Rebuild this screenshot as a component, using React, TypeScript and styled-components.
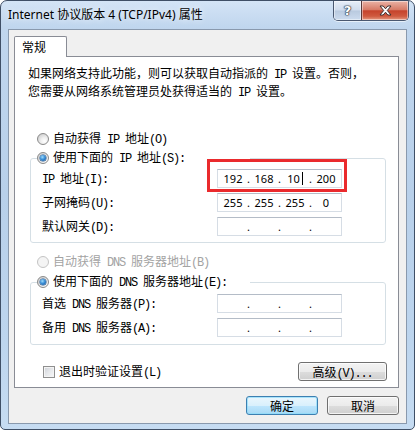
import React from 'react';
import styled, { createGlobalStyle, css } from 'styled-components';

const GlobalStyle = createGlobalStyle`
  html, body {
    margin: 0;
    padding: 0;
    background: #ffffff;
  }
  body {
    width: 415px;
    height: 430px;
    overflow: hidden;
    font-family: "Noto Sans CJK SC", sans-serif;
  }
  * {
    box-sizing: border-box;
  }
`;

const Window = styled.div`
  width: 415px;
  height: 430px;
  border: 1px solid #3f4f66;
  border-radius: 7px 7px 5px 5px;
  background: linear-gradient(180deg, #d4e4f6 0px, #c0d6ee 26px, #b8d0ea 45%, #bdd5ee 80%, #c6dcf2 100%);
  display: flex;
  flex-direction: column;
  overflow: hidden;
`;

const TitleBar = styled.div`
  height: 28px;
  flex-shrink: 0;
  display: flex;
  align-items: flex-start;
  padding: 0 5px 0 7px;
`;

const Title = styled.div`
  flex: 1;
  padding-top: 6px;
  font: 12px/16px "Noto Sans", "Noto Sans CJK SC", sans-serif;
  color: #000;
  text-shadow: 0 0 6px rgba(255, 255, 255, 0.95);
`;

const CaptionGroup = styled.div`
  display: flex;
  height: 20px;
  border: 1px solid #4a5870;
  border-top: none;
  border-radius: 0 0 5px 5px;
  overflow: hidden;
  box-shadow: 0 1px 0 rgba(255, 255, 255, 0.6);
`;

const CaptionButton = styled.div<{ $close?: boolean }>`
  width: ${(p) => (p.$close ? 47 : 27)}px;
  display: flex;
  align-items: center;
  justify-content: center;
  box-shadow: inset 0 0 0 1px rgba(255, 255, 255, 0.45);
  background: linear-gradient(180deg, #e6eef8 0%, #d0dced 48%, #b9cadf 52%, #ccdbee 100%);
  font: bold 13px/1 "DejaVu Sans", sans-serif;
  color: #fff;
  text-shadow: 0 0 1px #2e3a4a, 0 0 1px #2e3a4a, 0 0 1px #2e3a4a, 0 0 2px #2e3a4a;
  ${(p) =>
    p.$close &&
    css`
      border-left: 1px solid #5a3a3a;
      background: linear-gradient(180deg, #eab3a6 0%, #d77c68 45%, #c6432c 52%, #cf5a3f 80%, #e59a82 100%);
    `}
`;

const Client = styled.div`
  flex: 1;
  margin: 0 7px 5px;
  border: 1px solid #8999ad;
  background: #f0f0f0;
  padding: 6px 7px 8px 5px;
  display: flex;
  flex-direction: column;
`;

const TabStrip = styled.div`
  height: 20px;
  display: flex;
`;

const Tab = styled.div`
  position: relative;
  z-index: 1;
  width: 53px;
  height: 21px;
  border: 1px solid #898c95;
  border-bottom: none;
  border-radius: 2px 2px 0 0;
  background: #fff;
  padding-left: 7px;
  font: 12px/19px "Noto Sans CJK SC", sans-serif;
  color: #000;
`;

const Panel = styled.div`
  width: 385px;
  height: 332px;
  border: 1px solid #898c95;
  background: #fff;
  padding: 8px 12px 0 15px;
  display: flex;
  flex-direction: column;
  font: 12px/14px "Noto Sans CJK SC", sans-serif;
  color: #000;
`;

const Ascii = styled.span`
  font-family: "Liberation Mono", monospace;
  font-size: 12px;
  letter-spacing: -1.2px;
`;

const T: React.FC<{ s: string }> = ({ s }) => (
  <>
    {s.split(/([ -~]+)/).map((part, i) => (i % 2 ? <Ascii key={i}>{part}</Ascii> : part))}
  </>
);

const Description = styled.p`
  margin: 0 0 0 -2px;
  line-height: 15px;
  white-space: nowrap;
`;

const RadioRow = styled.label<{ $disabled?: boolean; $gap: number }>`
  display: flex;
  align-items: center;
  gap: 4px;
  height: 16px;
  margin-top: ${(p) => p.$gap}px;
  padding-left: 7px;
  color: ${(p) => (p.$disabled ? '#a3a3a3' : '#000')};
  white-space: nowrap;
`;

const Radio = styled.span<{ $checked?: boolean; $disabled?: boolean }>`
  position: relative;
  width: 12px;
  height: 12px;
  flex-shrink: 0;
  border-radius: 50%;
  border: 1px solid ${(p) => (p.$disabled ? '#c4c4c4' : '#8a8a8a')};
  background: ${(p) =>
    p.$disabled
      ? '#f4f4f4'
      : 'radial-gradient(circle at 65% 70%, #ffffff 0%, #f0f0f0 35%, #d4d4d4 75%, #c2c2c2 100%)'};

  ${(p) =>
    p.$checked &&
    css`
      &::after {
        content: '';
        position: absolute;
        left: 2px;
        top: 2px;
        width: 6px;
        height: 6px;
        border-radius: 50%;
        background: radial-gradient(circle at 40% 35%, #9fdcfb 0%, #3a8ed6 45%, #0e4c8f 100%);
        box-shadow: 0 0 0 0.5px #1c4f86;
      }
    `}
`;

const Group = styled.fieldset<{ $gap: number; $bottom: number }>`
  margin: ${(p) => p.$gap}px 0 0;
  padding: 0 0 ${(p) => p.$bottom}px 0;
  border: 1px solid #d5dfe5;
  border-radius: 3px;
  min-width: 0;
`;

const Legend = styled.legend`
  display: flex;
  align-items: center;
  gap: 4px;
  width: 213px;
  height: 16px;
  margin-left: 6px;
  padding: 0;
  white-space: nowrap;
`;

const FieldGrid = styled.div<{ $top: number }>`
  display: grid;
  grid-template-columns: 175px 125px;
  row-gap: 5px;
  align-items: center;
  margin-top: ${(p) => p.$top}px;
  padding-left: 11px;
  white-space: nowrap;
`;

const FieldCell = styled.div`
  position: relative;
  height: 19px;
`;

const IpField = styled.div`
  width: 125px;
  height: 19px;
  border: 1px solid #d6dde5;
  border-top-color: #b4bcc7;
  background: #fff;
  display: flex;
  align-items: center;
  padding: 0 3px;
  font: 11px/17px "Noto Sans", sans-serif;
  color: #000;
`;

const Octet = styled.span`
  width: 24px;
  text-align: center;
`;

const Dot = styled.span`
  width: 7px;
  text-align: center;
`;

const Caret = styled.span`
  display: inline-block;
  width: 1px;
  height: 13px;
  margin-left: 2px;
  background: #000;
  vertical-align: -2px;
`;

const Highlight = styled.div`
  position: absolute;
  left: -10px;
  top: -10px;
  right: -5px;
  bottom: -4px;
  border: 3px solid #ea2a2d;
  pointer-events: none;
`;

const BottomRow = styled.div`
  display: flex;
  align-items: center;
  justify-content: space-between;
  margin: 17px -1px 0 0;
  padding-left: 13px;
`;

const CheckLabel = styled.label`
  display: flex;
  align-items: center;
  gap: 4px;
  white-space: nowrap;
`;

const CheckBox = styled.span`
  width: 12px;
  height: 12px;
  border: 1px solid #8f8f8f;
  background: linear-gradient(135deg, #cdd1d6 0%, #e6e8eb 50%, #f8f8f8 100%);
  box-shadow: inset 0 0 0 1px #f4f4f4;
`;

const Button = styled.button<{ $w: number; $default?: boolean }>`
  width: ${(p) => p.$w}px;
  height: 19px;
  padding: 0;
  border: 1px solid #707070;
  border-radius: 3px;
  background: linear-gradient(180deg, #f3f3f3 0%, #ebebeb 50%, #dddddd 51%, #cfcfcf 100%);
  box-shadow: inset 0 0 0 1px rgba(255, 255, 255, 0.75);
  font: 12px/17px "Noto Sans CJK SC", sans-serif;
  color: #000;
  ${(p) =>
    p.$default &&
    css`
      border-color: #3c7fb1;
      background: linear-gradient(180deg, #eaf6fd 0%, #d9f0fc 50%, #bee6fd 51%, #a7d9f5 100%);
      box-shadow: inset 0 0 0 1px rgba(140, 220, 250, 0.7);
    `}
`;

const ButtonRow = styled.div`
  display: flex;
  justify-content: flex-end;
  gap: 9px;
  margin-top: 8px;
`;

const CloseGlyph = () => (
  <svg width="13" height="11" viewBox="0 0 13 11">
    <path
      d="M1 1h3.2l2.3 2.8 2.3-2.8H12L8.3 5.5 12 10H8.8L6.5 7.2 4.2 10H1l3.7-4.5z"
      fill="#fff"
      stroke="#3a3030"
      strokeWidth="1"
      strokeLinejoin="round"
    />
  </svg>
);

const IpValue: React.FC<{ parts: string[]; caretAt?: number }> = ({ parts, caretAt }) => (
  <IpField>
    {parts.map((part, i) => (
      <React.Fragment key={i}>
        {i > 0 && <Dot>.</Dot>}
        <Octet>
          {part}
          {caretAt === i && <Caret />}
        </Octet>
      </React.Fragment>
    ))}
  </IpField>
);

const empty = ['', '', '', ''];

export default function App() {
  return (
    <>
      <GlobalStyle />
      <Window>
        <TitleBar>
          <Title>Internet 协议版本 4 (TCP/IPv4) 属性</Title>
          <CaptionGroup>
            <CaptionButton>?</CaptionButton>
            <CaptionButton $close>
              <CloseGlyph />
            </CaptionButton>
          </CaptionGroup>
        </TitleBar>
        <Client>
          <TabStrip>
            <Tab>常规</Tab>
          </TabStrip>
          <Panel>
            <Description>
              <T s="如果网络支持此功能，则可以获取自动指派的 IP 设置。否则，" />
              <br />
              <T s="您需要从网络系统管理员处获得适当的 IP 设置。" />
            </Description>

            <RadioRow $gap={30}>
              <Radio />
              <span>
                <T s="自动获得 IP 地址(O)" />
              </span>
            </RadioRow>

            <Group $gap={3} $bottom={6}>
              <Legend>
                <Radio $checked />
                <span>
                  <T s="使用下面的 IP 地址(S):" />
                </span>
              </Legend>
              <FieldGrid $top={3}>
                <span>
                  <T s="IP 地址(I):" />
                </span>
                <FieldCell>
                  <IpValue parts={['192', '168', '10', '200']} caretAt={2} />
                  <Highlight />
                </FieldCell>
                <span>
                  <T s="子网掩码(U):" />
                </span>
                <IpValue parts={['255', '255', '255', '0']} />
                <span>
                  <T s="默认网关(D):" />
                </span>
                <IpValue parts={empty} />
              </FieldGrid>
            </Group>

            <RadioRow $gap={11} $disabled>
              <Radio $disabled />
              <span>
                <T s="自动获得 DNS 服务器地址(B)" />
              </span>
            </RadioRow>

            <Group $gap={4} $bottom={7}>
              <Legend>
                <Radio $checked />
                <span>
                  <T s="使用下面的 DNS 服务器地址(E):" />
                </span>
              </Legend>
              <FieldGrid $top={4}>
                <span>
                  <T s="首选 DNS 服务器(P):" />
                </span>
                <IpValue parts={empty} />
                <span>
                  <T s="备用 DNS 服务器(A):" />
                </span>
                <IpValue parts={empty} />
              </FieldGrid>
            </Group>

            <BottomRow>
              <CheckLabel>
                <CheckBox />
                <span>
                  <T s="退出时验证设置(L)" />
                </span>
              </CheckLabel>
              <Button $w={89}>
                <T s="高级(V)..." />
              </Button>
            </BottomRow>
          </Panel>
          <ButtonRow>
            <Button $w={72} $default>
              确定
            </Button>
            <Button $w={72}>取消</Button>
          </ButtonRow>
        </Client>
      </Window>
    </>
  );
}
